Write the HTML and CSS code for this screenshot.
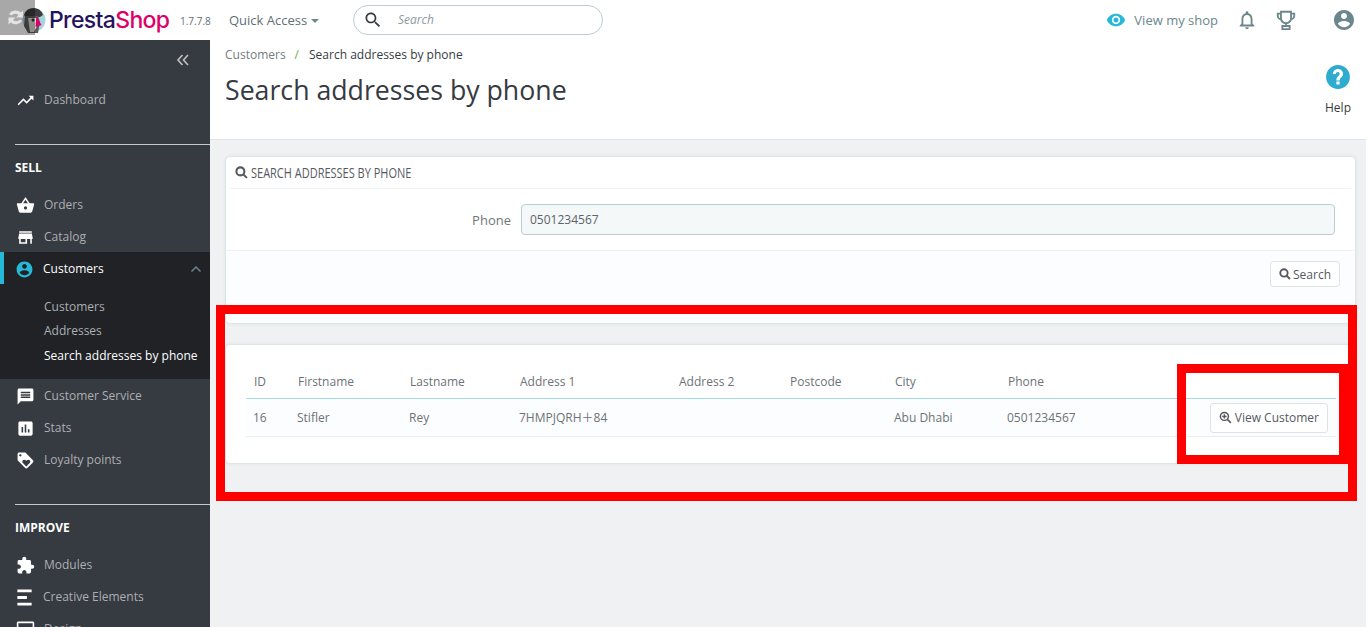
FILE: index.html
```html
<!DOCTYPE html>
<html lang="en">
<head>
  <meta charset="UTF-8">
  <title>Search addresses by phone</title>
  <link rel="stylesheet" href="styles.css">
</head>
<body>
  <svg class="sprite" xmlns="http://www.w3.org/2000/svg">
    <symbol id="i-trend" viewBox="0 0 24 24"><path d="M16 6l2.29 2.29-4.88 4.88-4-4L2 16.59 3.41 18l6-6 4 4 6.3-6.29L22 12V6z"/></symbol>
    <symbol id="i-basket" viewBox="0 0 24 24"><path d="M17.21 9l-4.38-6.56c-.19-.28-.51-.42-.83-.42-.32 0-.64.14-.83.43L6.79 9H2c-.55 0-1 .45-1 1 0 .09.01.18.04.27l2.54 9.27c.23.84 1 1.46 1.92 1.46h13c.92 0 1.69-.62 1.93-1.46l2.54-9.27L23 10c0-.55-.45-1-1-1h-4.79zM9 9l3-4.4L15 9H9zm3 8c-1.1 0-2-.9-2-2s.9-2 2-2 2 .9 2 2-.9 2-2 2z"/></symbol>
    <symbol id="i-store" viewBox="0 0 24 24"><path d="M20 4H4v2h16V4zm1 10v-2l-1-5H4l-1 5v2h1v6h10v-6h4v6h2v-6h1zm-9 4H6v-4h6v4z"/></symbol>
    <symbol id="i-account" viewBox="0 0 24 24"><path d="M12 2C6.48 2 2 6.48 2 12s4.48 10 10 10 10-4.48 10-10S17.52 2 12 2zm0 3c1.66 0 3 1.34 3 3s-1.34 3-3 3-3-1.34-3-3 1.34-3 3-3zm0 14.2c-2.5 0-4.71-1.28-6-3.22.03-1.99 4-3.08 6-3.08 1.99 0 5.97 1.09 6 3.08-1.29 1.94-3.5 3.22-6 3.22z"/></symbol>
    <symbol id="i-chat" viewBox="0 0 24 24"><path d="M20 2H4c-1.1 0-1.99.9-1.99 2L2 22l4-4h14c1.1 0 2-.9 2-2V4c0-1.1-.9-2-2-2zm-2 12H6v-2h12v2zm0-3H6V9h12v2zm0-3H6V6h12v2z"/></symbol>
    <symbol id="i-stats" viewBox="0 0 24 24"><path d="M19 3H5c-1.1 0-2 .9-2 2v14c0 1.1.9 2 2 2h14c1.1 0 2-.9 2-2V5c0-1.1-.9-2-2-2zM9 17H7v-7h2v7zm4 0h-2V7h2v10zm4 0h-2v-4h2v4z"/></symbol>
    <symbol id="i-loyalty" viewBox="0 0 24 24"><path d="M21.41 11.58l-9-9C12.05 2.22 11.55 2 11 2H4c-1.1 0-2 .9-2 2v7c0 .55.22 1.05.59 1.42l9 9c.36.36.86.58 1.41.58.55 0 1.05-.22 1.41-.59l7-7c.37-.36.59-.86.59-1.41 0-.55-.23-1.06-.59-1.42zM5.5 7C4.67 7 4 6.33 4 5.5S4.67 4 5.5 4 7 4.67 7 5.5 6.33 7 5.5 7zm11.77 8.27L13 19.54l-4.27-4.27C8.28 14.81 8 14.19 8 13.5c0-1.38 1.12-2.5 2.5-2.5.69 0 1.32.28 1.77.74l.73.72.73-.73c.45-.45 1.08-.73 1.77-.73 1.38 0 2.5 1.12 2.5 2.5 0 .69-.28 1.32-.73 1.77z"/></symbol>
    <symbol id="i-puzzle" viewBox="0 0 24 24"><path d="M20.5 11H19V7c0-1.1-.9-2-2-2h-4V3.5C13 2.12 11.88 1 10.5 1S8 2.12 8 3.5V5H4c-1.1 0-1.99.9-1.99 2v3.8H3.5c1.49 0 2.7 1.21 2.7 2.7s-1.21 2.7-2.7 2.7H2V20c0 1.1.9 2 2 2h3.8v-1.5c0-1.49 1.21-2.7 2.7-2.7 1.49 0 2.7 1.21 2.7 2.7V22H17c1.1 0 2-.9 2-2v-4h1.5c1.38 0 2.5-1.12 2.5-2.5S21.88 11 20.5 11z"/></symbol>
    <symbol id="i-elements" viewBox="0 0 24 24"><path d="M3 2h18v3.500H3zM3 10.250h12v3.500H3zM3 18.500h18V22H3z"/></symbol>
    <symbol id="i-desktop" viewBox="0 0 24 24"><path d="M21 2H3c-1.1 0-2 .9-2 2v12c0 1.1.9 2 2 2h7l-2 3v1h8v-1l-2-3h7c1.1 0 2-.9 2-2V4c0-1.1-.9-2-2-2zm0 14H3V4h18v12z"/></symbol>
    <symbol id="i-eye" viewBox="0 0 24 24"><path d="M12 4.500C7 4.500 2.730 7.610 1 12c1.730 4.390 6 7.500 11 7.500s9.270-3.110 11-7.500c-1.730-4.390-6-7.500-11-7.500zM12 17c-2.760 0-5-2.240-5-5s2.240-5 5-5 5 2.240 5 5-2.240 5-5 5zm0-8c-1.660 0-3 1.340-3 3s1.340 3 3 3 3-1.340 3-3-1.340-3-3-3z"/></symbol>
    <symbol id="i-bell" viewBox="0 0 24 24"><path d="M12 22c1.100 0 2-.9 2-2h-4c0 1.100.9 2 2 2zm6-6v-5c0-3.070-1.630-5.640-4.500-6.320V4c0-.83-.67-1.500-1.500-1.500s-1.500.67-1.500 1.500v.68C7.640 5.360 6 7.920 6 11v5l-2 2v1h16v-1l-2-2zm-2 1H8v-6c0-2.480 1.510-4.500 4-4.500s4 2.020 4 4.500v6z"/></symbol>
    <symbol id="i-help" viewBox="0 0 24 24"><path d="M12 1C5.930 1 1 5.930 1 12s4.930 11 11 11 11-4.930 11-11S18.070 1 12 1zm1.500 18h-3v-2.800h3V19zm2.100-7.300l-.9.900c-.8.750-1.200 1.300-1.200 2.600h-3v-.7c0-1.100.45-2.100 1.170-2.830l1.240-1.260c.37-.36.590-.86.590-1.410 0-1.100-.9-1.700-1.700-1.700-1 0-1.800.7-1.800 1.900H7.300c0-2.600 2.100-4.700 4.700-4.700s4.700 2.100 4.700 4.700c0 .97-.5 1.800-1.100 2.500z"/></symbol>
    <symbol id="i-search" viewBox="0 0 24 24"><path d="M15.500 14h-.79l-.28-.27C15.410 12.590 16 11.110 16 9.500 16 5.910 13.090 3 9.500 3S3 5.910 3 9.500 5.910 16 9.500 16c1.610 0 3.090-.59 4.230-1.570l.27.280v.79l5 4.990L20.490 19l-4.990-5zm-6 0C7.010 14 5 11.990 5 9.500S7.010 5 9.500 5 14 7.010 14 9.500 11.990 14 9.500 14z"/></symbol>
  </svg>

  <header class="topbar">
    <div class="brand">
      <svg class="brand-mark" viewBox="0 0 46 36">
        <circle cx="34" cy="20" r="11.500" fill="#a5d3df"/>
        <path d="M24 15a10 10 0 0 1 19 0l-3 2H26z" fill="#3d3d40"/>
        <path d="M25 16h13l2 6-2 11H28l-4-7z" fill="#5c5b5c"/>
        <path d="M28 18h8l1 8-3 6h-4z" fill="#d8d6d0"/>
        <circle cx="33" cy="20" r="1.500" fill="#333"/>
        <path d="M36.500 16l5 9-6 2z" fill="#df0067"/>
        <rect width="35" height="35" fill="#000" opacity=".34"/>
        <path d="M9 14a8 8 0 0 1 12-1.500l2-2v7h-7l2.500-2.500a5 5 0 0 0-7 .5z" fill="#e4e4e4"/>
        <path d="M22 21a8 8 0 0 1-11.500 1.500l-2 2v-7h7L13 20a5 5 0 0 0 7-.5z" fill="#e4e4e4"/>
      </svg>
      <span class="brand-name">Presta<em>Shop</em></span>
    </div>
    <span class="version">1.7.7.8</span>
    <a class="quick-access">Quick Access <i class="caret"></i></a>
    <div class="top-search">
      <svg class="icon-search"><use href="#i-search"/></svg>
      <span>Search</span>
    </div>
    <div class="top-right">
      <a class="view-shop"><svg class="icon-eye"><use href="#i-eye"/></svg>View my shop</a>
      <svg class="icon-bell"><use href="#i-bell"/></svg>
      <svg class="icon-trophy" viewBox="0 0 24 24">
        <path d="M6.500 3h11v7a5.500 5.500 0 0 1-11 0zM6.500 5H3v2.500a3.500 3.500 0 0 0 3.500 3.500M17.500 5H21v2.500a3.500 3.500 0 0 1-3.500 3.500M12 15.500V18M8 18.500h8V22H8z"/>
      </svg>
      <svg class="icon-user"><use href="#i-account"/></svg>
    </div>
  </header>

  <div class="layout">
    <nav class="sidebar">
      <div class="collapse">
        <svg viewBox="0 0 14 12"><path d="M6.500 1L2 6l4.500 5M12 1L7.500 6l4.500 5"/></svg>
      </div>
      <a class="nav-item"><svg><use href="#i-trend"/></svg>Dashboard</a>

      <div class="nav-section nav-section-sell">SELL</div>
      <a class="nav-item"><svg><use href="#i-basket"/></svg>Orders</a>
      <a class="nav-item"><svg><use href="#i-store"/></svg>Catalog</a>
      <div class="nav-group">
        <a class="nav-item active">
          <svg><use href="#i-account"/></svg>Customers
          <svg class="chevron" viewBox="0 0 12 8"><path d="M1.500 6.500L6 2l4.500 4.500"/></svg>
        </a>
        <ul class="subnav">
          <li>Customers</li>
          <li>Addresses</li>
          <li class="current">Search addresses by phone</li>
        </ul>
      </div>
      <a class="nav-item"><svg><use href="#i-chat"/></svg>Customer Service</a>
      <a class="nav-item"><svg><use href="#i-stats"/></svg>Stats</a>
      <a class="nav-item"><svg><use href="#i-loyalty"/></svg>Loyalty points</a>

      <div class="nav-section nav-section-improve">IMPROVE</div>
      <a class="nav-item"><svg><use href="#i-puzzle"/></svg>Modules</a>
      <a class="nav-item nav-tight"><svg><use href="#i-elements"/></svg>Creative Elements</a>
      <a class="nav-item"><svg><use href="#i-desktop"/></svg>Design</a>
    </nav>

    <main class="content">
      <div class="page-head">
        <div>
          <div class="breadcrumb"><a>Customers</a><i>/</i><span>Search addresses by phone</span></div>
          <h1>Search addresses by phone</h1>
        </div>
        <a class="help">
          <svg><use href="#i-help"/></svg>
          <span>Help</span>
        </a>
      </div>

      <div class="page-body">
        <section class="panel panel-form">
          <div class="panel-heading">
            <svg class="fa-search" viewBox="0 0 14 14"><circle cx="5.800" cy="5.800" r="4.300"/><path d="M9 9l3.800 3.800"/></svg>
            <span class="narrow">SEARCH ADDRESSES BY PHONE</span>
          </div>
          <div class="form-row">
            <label>Phone</label>
            <input class="form-input" type="text" value="0501234567">
          </div>
          <div class="panel-footer">
            <button class="btn">
              <svg class="fa-search" viewBox="0 0 14 14"><circle cx="5.800" cy="5.800" r="4.300"/><path d="M9 9l3.800 3.800"/></svg>
              Search
            </button>
          </div>
        </section>

        <section class="panel panel-results">
          <table class="results">
            <thead>
              <tr>
                <th class="col-id">ID</th>
                <th class="col-first">Firstname</th>
                <th class="col-last">Lastname</th>
                <th class="col-addr1">Address 1</th>
                <th class="col-addr2">Address 2</th>
                <th class="col-post">Postcode</th>
                <th class="col-city">City</th>
                <th class="col-phone">Phone</th>
                <th></th>
              </tr>
            </thead>
            <tbody>
              <tr>
                <td>16</td>
                <td>Stifler</td>
                <td>Rey</td>
                <td>7HMPJQRH＋84</td>
                <td></td>
                <td></td>
                <td>Abu Dhabi</td>
                <td>0501234567</td>
                <td class="cell-action">
                  <button class="btn">
                    <svg class="fa-zoom" viewBox="0 0 14 14"><circle cx="5.800" cy="5.800" r="4.300"/><path d="M9 9l3.800 3.800M3.500 5.800h4.600M5.800 3.500v4.600"/></svg>
                    View Customer
                  </button>
                </td>
              </tr>
            </tbody>
          </table>
        </section>
      </div>
    </main>
  </div>

  <!-- annotation boxes drawn on top of the screenshot -->
  <div class="mark mark-outer"></div>
  <div class="mark mark-inner"></div>
</body>
</html>
```

FILE: styles.css
```css
* {
  box-sizing: border-box;
}

html, body {
  height: 100%;
}

body {
  margin: 0;
  height: 627px;
  overflow: hidden;
  font-family: "Open Sans", "Noto Sans", "Noto Sans CJK SC", sans-serif;
  font-size: 12px;
  color: #363a41;
  background: #eff1f2;
  position: relative;
}

.sprite {
  display: none;
}

/* top bar */
.topbar {
  height: 40px;
  background: #fff;
  display: flex;
  align-items: center;
  color: #6c868e;
}

.brand {
  width: 180px;
  height: 40px;
  display: flex;
  align-items: flex-start;
}

.brand-mark {
  width: 46px;
  height: 36px;
  flex: none;
}

.brand-name {
  font-family: Inter, "Open Sans", sans-serif;
  font-weight: 500;
  font-size: 23px;
  line-height: 40px;
  margin-left: 3px;
  letter-spacing: -0.65px;
  color: #25125c;
}

.brand-name em {
  font-style: normal;
  color: #df0067;
}

.version {
  width: 49px;
  font-size: 10px;
  color: #5f6f76;
  position: relative;
  top: 1px;
}

.quick-access {
  width: 124px;
  font-size: 13px;
  color: #5f6f76;
}

.caret {
  display: inline-block;
  margin-left: 0;
  vertical-align: 2px;
  border-top: 4px solid #6c868e;
  border-left: 4px solid transparent;
  border-right: 4px solid transparent;
}

.top-search {
  width: 250px;
  height: 30px;
  border: 1px solid #bbcdd2;
  border-radius: 15px;
  display: flex;
  align-items: center;
  padding-left: 9px;
  font-style: italic;
  color: #8e9ba0;
}

.top-search span {
  margin: -2px 0 0 0;
}

.icon-search {
  width: 20px;
  height: 20px;
  fill: #363a41;
  margin-right: 15px;
}

.top-right {
  margin-left: auto;
  display: flex;
  align-items: center;
  padding-right: 10px;
}

.view-shop {
  display: flex;
  align-items: center;
  font-size: 13px;
  color: #6c868e;
}

.icon-eye {
  width: 20px;
  height: 20px;
  fill: #25b9d7;
  margin-right: 8px;
}

.icon-bell {
  width: 22px;
  height: 22px;
  fill: #6c868e;
  margin-left: 18px;
}

.icon-trophy {
  width: 22px;
  height: 22px;
  fill: none;
  stroke: #6c868e;
  stroke-width: 2;
  margin-left: 17px;
}

.icon-user {
  width: 24px;
  height: 24px;
  fill: #6c868e;
  margin-left: 35px;
}

/* sidebar */
.layout {
  display: flex;
  height: 587px;
}

.sidebar {
  width: 210px;
  flex: none;
  background: #363a41;
  overflow: hidden;
  color: #acafb2;
}

.collapse {
  height: 43px;
  padding: 13px 20px 0 0;
  text-align: right;
}

.collapse svg {
  width: 14px;
  height: 12px;
  fill: none;
  stroke: #bebebe;
  stroke-width: 1.700;
}

.nav-item {
  height: 32px;
  display: flex;
  align-items: center;
  padding: 2px 0 0 16px;
  line-height: 30px;
  font-size: 12px;
  white-space: nowrap;
}

.nav-item svg {
  width: 19px;
  height: 19px;
  flex: none;
  fill: #fff;
  margin-right: 9px;
}

.nav-tight {
  margin-left: -1px;
}

.nav-section {
  margin-left: 15px;
  border-top: 1px solid #bbcdd2;
  font-weight: 700;
  color: #fff;
  line-height: 16px;
  padding-top: 15px;
  height: 44px;
}

.nav-section-sell {
  margin-top: 29px;
}

.nav-section-improve {
  margin-top: 29px;
}

.nav-group {
  background: #202226;
  height: 127px;
}

.nav-item.active {
  color: #fff;
  border-left: 4px solid #25b9d7;
  padding-left: 11px;
  position: relative;
}

.nav-item.active > svg:first-child {
  fill: #25b9d7;
}

.nav-item.active .chevron {
  position: absolute;
  right: 8px;
  top: 13px;
  width: 12px;
  height: 8px;
  margin: 0;
  fill: none;
  stroke: #6c868e;
  stroke-width: 1.5;
}

.subnav {
  list-style: none;
  margin: 0;
  padding: 11px 0 0 44px;
}

.subnav li {
  line-height: 24px;
  height: 24.300px;
  white-space: nowrap;
}

.subnav .current {
  color: #fff;
}

/* main column */
.content {
  flex: 1;
  min-width: 0;
}

.page-head {
  height: 100px;
  background: #fff;
  border-bottom: 1px solid #dfe3e5;
  padding: 6px 15px 0 15px;
  display: flex;
  justify-content: space-between;
}

.breadcrumb {
  font-size: 12px;
  line-height: 17px;
  color: #767c81;
}

.breadcrumb i {
  font-style: normal;
  color: #6fa83c;
  margin: 0 10px 0 9px;
}

.breadcrumb span {
  color: #363a41;
}

h1 {
  margin: 9px 0 0;
  font-size: 26.700px;
  font-weight: 400;
  line-height: 36px;
  color: #363a41;
}

.help {
  display: flex;
  flex-direction: column;
  align-items: center;
  padding-top: 18px;
  color: #363a41;
}

.help svg {
  width: 26px;
  height: 26px;
  fill: #2eacd0;
}

.help span {
  margin-top: 10px;
  line-height: 16px;
}

.page-body {
  padding: 16px 10px 0 15px;
}

.panel {
  background: #fff;
  border: 1px solid #dbe6e9;
  border-radius: 5px;
  box-shadow: 0 0 4px 0 rgba(0, 0, 0, .06);
}

.panel-form {
  height: 168px;
  margin-bottom: 20px;
  overflow: hidden;
}

.panel-heading {
  height: 32px;
  margin: 0 4px 0 4px;
  padding-left: 5px;
  border-bottom: 1px solid #eff1f2;
  display: flex;
  align-items: center;
  color: #363a41;
}

.narrow {
  display: inline-block;
  font-size: 14px;
  font-weight: 500;
  transform: scaleX(.785);
  transform-origin: left center;
  white-space: nowrap;
  color: #55595f;
}

.fa-search,
.fa-zoom {
  width: 13px;
  height: 13px;
  flex: none;
  fill: none;
  stroke: #55595f;
  stroke-width: 2.200;
  margin-right: 3px;
}

.fa-zoom {
  stroke-width: 1.600;
}

.form-row {
  height: 62px;
  display: flex;
  align-items: center;
  border-bottom: 1px solid #eff1f2;
}

.form-row label {
  width: 285px;
  text-align: right;
  font-size: 13px;
  color: #70777b;
}

.form-input {
  margin-left: 10px;
  width: 814px;
  height: 31px;
  border: 1px solid #bbcdd2;
  border-radius: 4px;
  background: #f5f8f9;
  padding: 0 8px;
  font-family: inherit;
  font-size: 12px;
  color: #5c6367;
}

.panel-footer {
  height: 72px;
  background: #fcfdfe;
  padding: 10px 15px 0 0;
  text-align: right;
}

.btn {
  height: 26px;
  display: inline-flex;
  align-items: center;
  padding: 0 8px;
  background: #fff;
  border: 1px solid #dfe3e5;
  border-radius: 3px;
  font-family: inherit;
  font-size: 12px;
  color: #55595f;
}

.panel-footer .btn {
  padding: 0 8px;
}

.panel-footer .fa-search {
  width: 12px;
  height: 12px;
  margin-right: 2px;
}

.panel-results {
  height: 120px;
  margin-top: 0;
  padding: 20px 19px 0 20px;
}

.results {
  width: 1090px;
  table-layout: fixed;
  border-collapse: separate;
  border-spacing: 0;
}

.results th {
  height: 34px;
  padding: 0 0 0 8px;
  text-align: left;
  font-weight: 400;
  color: #6c7377;
  border-bottom: 1px solid #a4d9ec;
}

.results td {
  height: 38px;
  padding: 0 0 0 7px;
  background: #fcfdfe;
  color: #6c7377;
  line-height: 16px;
  border-bottom: 1px solid #e6eef1;
}

.col-id { width: 44px; }
.col-first { width: 112px; }
.col-last { width: 110px; }
.col-addr1 { width: 159px; }
.col-addr2 { width: 111px; }
.col-post { width: 105px; }
.col-city { width: 113px; }
.col-phone { width: 175px; }

.results .cell-action {
  padding: 0 8px 0 0;
  text-align: right;
}

.cell-action .btn {
  height: 30px;
}

/* red annotation frames */
.mark {
  position: absolute;
  border: 9px solid #f00;
  pointer-events: none;
}

.mark-outer {
  left: 216px;
  top: 305px;
  width: 1141px;
  height: 196px;
}

.mark-inner {
  left: 1177px;
  top: 364px;
  width: 171px;
  height: 100px;
}
```
